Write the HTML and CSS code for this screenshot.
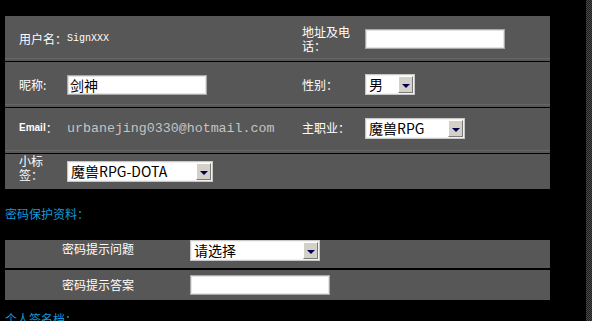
FILE: index.html
```html
<!DOCTYPE html>
<html lang="zh-CN">
<head>
    <meta charset="UTF-8">
    <title>个人资料</title>
    <link rel="stylesheet" href="styles.css">
</head>
<body>
    <div class="page">
        <div class="info">
            <div class="row">
                <div class="cell span2"><span class="lbl">用户名：</span><span class="sign">SignXXX</span></div>
                <div class="cell"><span class="lbl wrap4">地址及电话：</span></div>
                <div class="cell"><input type="text" class="text"></div>
            </div>
            <div class="row">
                <div class="cell"><span class="lbl">昵称:</span></div>
                <div class="cell"><input type="text" class="text" value="剑神"></div>
                <div class="cell"><span class="lbl">性别：</span></div>
                <div class="cell">
                    <div class="pick w50"><span class="pick-text">男</span><span class="pick-btn"></span></div>
                </div>
            </div>
            <div class="row raised">
                <div class="cell"><span class="lbl mail">Email</span><span class="lbl">：</span></div>
                <div class="cell"><span class="mail-val">urbanejing0330@hotmail.com</span></div>
                <div class="cell"><span class="lbl">主职业：</span></div>
                <div class="cell">
                    <div class="pick w100"><span class="pick-text">魔兽RPG</span><span class="pick-btn"></span></div>
                </div>
            </div>
            <div class="row last">
                <div class="cell"><span class="lbl wrap2">小标签：</span></div>
                <div class="cell">
                    <div class="pick w146"><span class="pick-text">魔兽RPG-DOTA</span><span class="pick-btn"></span></div>
                </div>
                <div class="cell"></div>
                <div class="cell"></div>
            </div>
        </div>

        <div class="title">密码保护资料：</div>

        <div class="safe">
            <div class="safe-row top">
                <span class="lbl safe-lbl">密码提示问题</span>
                <div class="pick w130"><span class="pick-text">请选择</span><span class="pick-btn"></span></div>
            </div>
            <div class="safe-row">
                <span class="lbl safe-lbl">密码提示答案</span>
                <input type="text" class="text">
            </div>
        </div>

        <div class="title bottom">个人签名档：</div>
    </div>
    <div class="scrollbar"></div>
</body>
</html>
```

FILE: styles.css
```css
body {
    margin: 0;
    background: #000;
    font-family: "Noto Sans CJK SC", "Liberation Sans", sans-serif;
    font-size: 12px;
    color: #fff;
    overflow: hidden;
}
.page {
    padding: 16px 0 0 5px;
    width: 545px;
}
.row {
    display: grid;
    grid-template-columns: 62px 235px 63px 1fr;
    height: 45px;
    border-bottom: 1px solid #000;
    background: linear-gradient(to top, #575757 2px, #666 2px, #666 3px, #575757 3px);
}
.row.raised {
    box-sizing: border-box;
    height: 46px;
    padding-bottom: 5px;
}
.row.last {
    height: 35px;
    border-bottom: none;
    background: #575757;
}
.cell {
    display: flex;
    align-items: center;
}
.cell:first-child {
    padding-left: 14px;
}
.span2 {
    grid-column: span 2;
}
.lbl {
    line-height: 14px;
    color: #fff;
}
.wrap4 {
    width: 50px;
}
.wrap2 {
    width: 26px;
    margin-top: -8px;
}
.sign {
    font-family: "Liberation Mono", monospace;
    font-size: 10px;
}
.mail {
    font-family: "Liberation Sans", sans-serif;
    font-weight: bold;
    font-size: 10px;
}
.mail-val {
    font-family: "Liberation Mono", monospace;
    font-size: 13.3px;
    color: #c4c4c4;
}
.text {
    box-sizing: border-box;
    width: 140px;
    height: 20px;
    margin: 0;
    padding: 0 2px;
    border: 1px solid #a8a8a8;
    box-shadow: inset 0 0 0 1px #e4e4e4;
    background: #fff;
    font-family: "Noto Sans CJK SC", sans-serif;
    font-size: 14px;
    color: #000;
    outline: none;
}
.pick {
    box-sizing: border-box;
    display: flex;
    height: 21px;
    border: 1px solid #c8c8c8;
    box-shadow: inset 0 0 0 1px #f2f2f2;
    background: #fff;
    color: #000;
    font-size: 14px;
}
.w50 { width: 50px; }
.w100 { width: 100px; }
.w130 { width: 130px; }
.w146 { width: 146px; }
.pick-text {
    flex: 1;
    padding-left: 3px;
    line-height: 19px;
    white-space: nowrap;
    overflow: hidden;
}
.pick-btn {
    position: relative;
    width: 13px;
    margin: 1px 1px 1px 0;
    background: #d4d0c8;
    border: 1px solid;
    border-color: #fff #7a7a7a #7a7a7a #fff;
}
.pick-btn::after {
    content: "";
    position: absolute;
    left: 3px;
    top: 7px;
    border-left: 4px solid transparent;
    border-right: 4px solid transparent;
    border-top: 4px solid #000050;
}
.title {
    margin: 18px 0 0;
    color: #139ad6;
    line-height: 14px;
}
.safe {
    margin-top: 19px;
}
.safe-row {
    display: grid;
    grid-template-columns: 185px 1fr;
    align-items: center;
    height: 30px;
    background: #575757;
}
.safe-row.top {
    height: 28px;
    margin-bottom: 2px;
    align-items: start;
}
.safe-lbl {
    padding-left: 57px;
}
.safe-row.top .safe-lbl {
    padding-top: 2px;
}
.title.bottom {
    margin-top: 12px;
}
.scrollbar {
    position: fixed;
    top: 0;
    right: 0;
    width: 6px;
    height: 100%;
    background: repeating-conic-gradient(#4a4a4a 0 25%, #1a1a1a 0 50%) 0 0 / 2px 2px;
}
```
